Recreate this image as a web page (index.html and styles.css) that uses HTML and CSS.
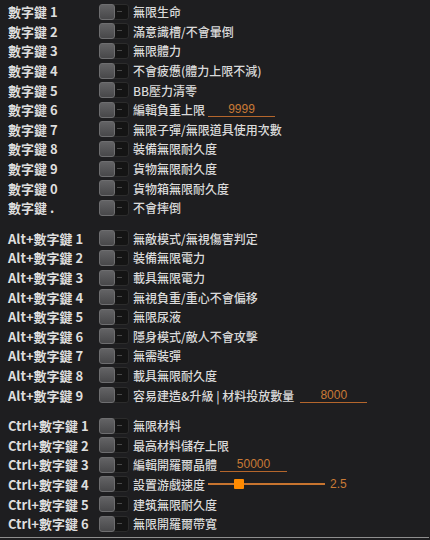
FILE: index.html
```html
<!DOCTYPE html>
<html lang="zh-Hant">
<head>
    <meta charset="UTF-8">
    <title>修改器</title>
    <link rel="stylesheet" href="styles.css">
</head>
<body>
<div class="panel">

    <!-- 數字鍵 -->
    <div class="group">
        <div class="row"><span class="key">數字鍵 1</span><span class="toggle"><i></i></span><span class="desc">無限生命</span></div>
        <div class="row"><span class="key">數字鍵 2</span><span class="toggle"><i></i></span><span class="desc">滿意識槽/不會暈倒</span></div>
        <div class="row"><span class="key">數字鍵 3</span><span class="toggle"><i></i></span><span class="desc">無限體力</span></div>
        <div class="row"><span class="key">數字鍵 4</span><span class="toggle"><i></i></span><span class="desc">不會疲憊(體力上限不減)</span></div>
        <div class="row"><span class="key">數字鍵 5</span><span class="toggle"><i></i></span><span class="desc">BB壓力清零</span></div>
        <div class="row"><span class="key">數字鍵 6</span><span class="toggle"><i></i></span><span class="desc">編輯負重上限</span><span class="value">9999</span></div>
        <div class="row"><span class="key">數字鍵 7</span><span class="toggle"><i></i></span><span class="desc">無限子彈/無限道具使用次數</span></div>
        <div class="row"><span class="key">數字鍵 8</span><span class="toggle"><i></i></span><span class="desc">裝備無限耐久度</span></div>
        <div class="row"><span class="key">數字鍵 9</span><span class="toggle"><i></i></span><span class="desc">貨物無限耐久度</span></div>
        <div class="row"><span class="key">數字鍵 0</span><span class="toggle"><i></i></span><span class="desc">貨物箱無限耐久度</span></div>
        <div class="row"><span class="key">數字鍵 .</span><span class="toggle"><i></i></span><span class="desc">不會摔倒</span></div>
    </div>

    <!-- Alt+數字鍵 -->
    <div class="group">
        <div class="row"><span class="key">Alt+數字鍵 1</span><span class="toggle"><i></i></span><span class="desc">無敵模式/無視傷害判定</span></div>
        <div class="row"><span class="key">Alt+數字鍵 2</span><span class="toggle"><i></i></span><span class="desc">裝備無限電力</span></div>
        <div class="row"><span class="key">Alt+數字鍵 3</span><span class="toggle"><i></i></span><span class="desc">載具無限電力</span></div>
        <div class="row"><span class="key">Alt+數字鍵 4</span><span class="toggle"><i></i></span><span class="desc">無視負重/重心不會偏移</span></div>
        <div class="row"><span class="key">Alt+數字鍵 5</span><span class="toggle"><i></i></span><span class="desc">無限尿液</span></div>
        <div class="row"><span class="key">Alt+數字鍵 6</span><span class="toggle"><i></i></span><span class="desc">隱身模式/敵人不會攻擊</span></div>
        <div class="row"><span class="key">Alt+數字鍵 7</span><span class="toggle"><i></i></span><span class="desc">無需裝彈</span></div>
        <div class="row"><span class="key">Alt+數字鍵 8</span><span class="toggle"><i></i></span><span class="desc">載具無限耐久度</span></div>
        <div class="row"><span class="key">Alt+數字鍵 9</span><span class="toggle"><i></i></span><span class="desc">容易建造&amp;升級 | 材料投放數量</span><span class="value value-wide">8000</span></div>
    </div>

    <!-- Ctrl+數字鍵 -->
    <div class="group">
        <div class="row"><span class="key">Ctrl+數字鍵 1</span><span class="toggle"><i></i></span><span class="desc">無限材料</span></div>
        <div class="row"><span class="key">Ctrl+數字鍵 2</span><span class="toggle"><i></i></span><span class="desc">最高材料儲存上限</span></div>
        <div class="row"><span class="key">Ctrl+數字鍵 3</span><span class="toggle"><i></i></span><span class="desc">編輯開羅爾晶體</span><span class="value">50000</span></div>
        <div class="row"><span class="key">Ctrl+數字鍵 4</span><span class="toggle"><i></i></span><span class="desc">設置游戲速度</span>
            <span class="slider"><span class="thumb"></span></span><span class="slider-val">2.5</span>
        </div>
        <div class="row"><span class="key">Ctrl+數字鍵 5</span><span class="toggle"><i></i></span><span class="desc">建筑無限耐久度</span></div>
        <div class="row"><span class="key">Ctrl+數字鍵 6</span><span class="toggle"><i></i></span><span class="desc">無限開羅爾帶寬</span></div>
    </div>

</div>
</body>
</html>
```

FILE: styles.css
```css
body {
    margin: 0;
    background-color: #1e1e20;
    font-family: "Noto Sans CJK TC", "Noto Sans", sans-serif;
    color: #dcdcdc;
}

.panel {
    height: 538px;
    padding: 2px 0 0 8px;
    box-sizing: border-box;
    width: 429px;
    border-bottom: 1px solid #8e8e8e;
}

.group + .group {
    margin-top: 11px;
}

.row {
    display: flex;
    align-items: center;
    height: 19.6px;
}

/* 快捷鍵 */
.key {
    width: 91px;
    flex: none;
    font-size: 13px;
    font-weight: bold;
    color: #dedede;
    white-space: nowrap;
}

/* 開關 */
.toggle {
    position: relative;
    flex: none;
    width: 30px;
    height: 16px;
    box-sizing: border-box;
    background-color: #141414;
    border: 1px solid #2c2c2c;
    border-radius: 3px;
    margin-right: 4px;
}

.toggle::before {
    content: "";
    position: absolute;
    left: -1px;
    top: -1px;
    width: 16px;
    height: 16px;
    box-sizing: border-box;
    border: 1px solid #6e6e70;
    border-radius: 3px;
    background: linear-gradient(#636365, #48484a);
}

.toggle i {
    position: absolute;
    left: 17px;
    top: 6px;
    width: 5px;
    height: 1px;
    background-color: #4a4a4a;
}

.desc {
    font-size: 12px;
    font-weight: 500;
    color: #dadada;
    white-space: nowrap;
}

/* 數值欄 */
.value {
    display: inline-block;
    width: 67px;
    margin-left: 3px;
    border-bottom: 1px solid #b4662c;
    text-align: center;
    font-family: "Liberation Sans", sans-serif;
    font-size: 12px;
    line-height: 14px;
    color: #c97a36;
}

.value-wide {
    margin-left: 6px;
}

/* 速度滑桿 */
.slider {
    position: relative;
    width: 117px;
    height: 2px;
    margin-left: 3px;
    background-color: #c7742f;
}

.thumb {
    position: absolute;
    left: 26px;
    top: -4px;
    width: 10px;
    height: 10px;
    background-color: #ff8a00;
    border-radius: 1px;
}

.slider-val {
    margin-left: 5px;
    font-family: "Liberation Sans", sans-serif;
    font-size: 12px;
    color: #c97a36;
}
```
